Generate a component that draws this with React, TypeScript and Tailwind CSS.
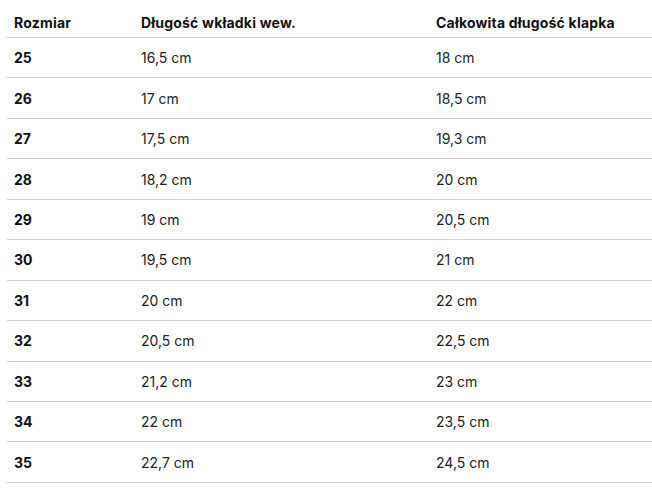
import React from "react"

// Size chart table
const rows = [
    ["25", "16,5 cm", "18 cm"],
    ["26", "17 cm", "18,5 cm"],
    ["27", "17,5 cm", "19,3 cm"],
    ["28", "18,2 cm", "20 cm"],
    ["29", "19 cm", "20,5 cm"],
    ["30", "19,5 cm", "21 cm"],
    ["31", "20 cm", "22 cm"],
    ["32", "20,5 cm", "22,5 cm"],
    ["33", "21,2 cm", "23 cm"],
    ["34", "22 cm", "23,5 cm"],
    ["35", "22,7 cm", "24,5 cm"],
]

const App = () => {
    return (
        <div className="bg-white w-[652px] h-[490px] overflow-hidden pl-[7px] font-['Inter',sans-serif]">
            {/* Header */}
            <div className="grid grid-cols-[127px_295px_1fr] border-b border-[#cfcfcf] h-[38px] text-[14px] font-bold text-[#111] leading-[17px] tracking-[0.2px]">
                <div className="pl-[7px] pt-[14px]">Rozmiar</div>
                <div className="pl-[7px] pt-[14px]">Długość wkładki wew.</div>
                <div className="pl-[7px] pt-[14px]">Całkowita długość klapka</div>
            </div>

            {/* Body */}
            {rows.map((row, index) => (
                <div
                    key={index}
                    className="grid grid-cols-[127px_295px_1fr] items-center border-b border-[#cfcfcf] h-[40.45px] text-[14px] text-[#222] leading-[17px]"
                >
                    <div className="pl-[7px] font-bold text-[#111]">{row[0]}</div>
                    <div className="pl-[7px]">{row[1]}</div>
                    <div className="pl-[7px]">{row[2]}</div>
                </div>
            ))}
        </div>
    )
}

export default App
